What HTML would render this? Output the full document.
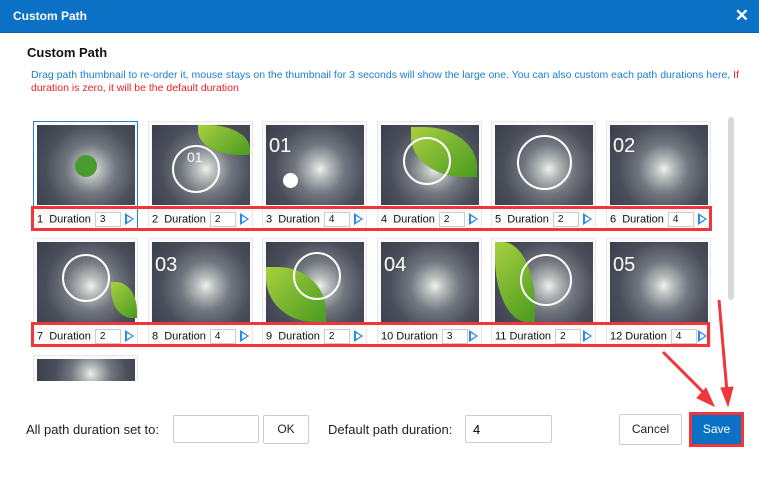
<!DOCTYPE html><html><head><meta charset="utf-8"><style>
*{margin:0;padding:0;box-sizing:border-box}
body{width:759px;height:497px;background:#fff;position:relative;overflow:hidden;font-family:"Liberation Sans",sans-serif}
.bar{position:absolute;left:0;top:0;width:759px;height:33px;background:#0a71c5;border-bottom:1px solid #0b5fa5}
.bar span{position:absolute;left:13px;top:9px;color:#fff;font-size:12px;font-weight:bold}
.x{position:absolute;right:10px;top:6px;color:#fff;font-size:17px;font-weight:bold}
.h{position:absolute;left:27px;top:45px;font-size:13px;font-weight:bold;color:#111}
.d{position:absolute;left:31px;top:69px;font-size:10.5px;line-height:13px;color:#1a7fd0;width:728px}
.d b{font-weight:normal;color:#f02020}
.card{position:absolute;width:105px;height:109px;border:1px solid #e8e8e8;background:#fafafa}
.th{position:absolute;left:3px;top:3px;width:98px;height:80px;background:radial-gradient(circle at 55% 55%,#eef3ee 0%,#b5baba 14%,#72767f 36%,#4a4e5a 65%,#3a3d4a 100%)}
.card.sel{border:1px solid #1e7fd8}
.ring{position:absolute;border:2px solid #fff;border-radius:50%}
.num{position:absolute;color:#fff;font-size:20px}
.leaf{position:absolute;background:linear-gradient(135deg,#a8d040,#4a9a20);border-radius:0 80% 0 80%}
.ft{position:absolute;left:3px;top:90px;font-size:11px;color:#111;white-space:nowrap}
.ft i{font-style:normal;display:inline-block;width:26px;height:15px;border:1px solid #ccc;background:#fff;vertical-align:middle;font-size:10px;padding-left:4px;line-height:13px;margin-left:4px}
.ft em{position:absolute;left:88px;top:1px;width:0;height:0;border-left:9px solid #2a8be0;border-top:6px solid transparent;border-bottom:6px solid transparent}
.ft em:after{content:"";position:absolute;left:-7px;top:-3px;border-left:5px solid #fff;border-top:3px solid transparent;border-bottom:3px solid transparent}
.red{position:absolute;border:3px solid #f0363a}
.lbl{position:absolute;font-size:13px;color:#222}
.in{position:absolute;border:1px solid #ccc;background:#fff;border-radius:2px;font-size:13px;padding:6px 7px}
.btn{position:absolute;border:1px solid #ccc;background:#fff;border-radius:2px;font-size:12px;text-align:center;color:#222}
</style></head><body>
<div class="bar"><span>Custom Path</span><div class="x">✕</div></div>
<div class="h">Custom Path</div>
<div class="d">Drag path thumbnail to re-order it, mouse stays on the thumbnail for 3 seconds will show the large one. You can also custom each path durations here, <b>If duration is zero, it will be the default duration</b></div>

<div class="card sel" style="left:33px;top:121px"><div class="th"><div class="leaf" style="left:38px;top:30px;width:22px;height:22px;border-radius:50%;background:#4a9a30"></div></div><div class="ft">1&nbsp; Duration<i>3</i><em></em></div></div>
<div class="card" style="left:148px;top:121px"><div class="th"><div class="ring" style="left:20px;top:20px;width:48px;height:48px"></div><div class="leaf" style="left:46px;top:0;width:52px;height:30px"></div><div class="num" style="left:35px;top:24px;font-size:14px">01</div></div><div class="ft">2&nbsp; Duration<i>2</i><em></em></div></div>
<div class="card" style="left:262px;top:121px"><div class="th"><div class="num" style="left:3px;top:10px">01</div><div class="ring" style="left:17px;top:48px;width:15px;height:15px;background:#fff"></div></div><div class="ft">3&nbsp; Duration<i>4</i><em></em></div></div>
<div class="card" style="left:377px;top:121px"><div class="th"><div class="leaf" style="left:30px;top:2px;width:66px;height:50px"></div><div class="ring" style="left:22px;top:12px;width:48px;height:48px"></div></div><div class="ft">4&nbsp; Duration<i>2</i><em></em></div></div>
<div class="card" style="left:491px;top:121px"><div class="th"><div class="ring" style="left:22px;top:10px;width:55px;height:55px"></div></div><div class="ft">5&nbsp; Duration<i>2</i><em></em></div></div>
<div class="card" style="left:606px;top:121px"><div class="th"><div class="num" style="left:3px;top:10px">02</div></div><div class="ft">6&nbsp; Duration<i>4</i><em></em></div></div>

<div class="card" style="left:33px;top:238px"><div class="th"><div class="ring" style="left:25px;top:12px;width:48px;height:48px"></div><div class="leaf" style="left:74px;top:40px;width:26px;height:36px"></div></div><div class="ft">7&nbsp; Duration<i>2</i><em></em></div></div>
<div class="card" style="left:148px;top:238px"><div class="th"><div class="num" style="left:3px;top:12px">03</div></div><div class="ft">8&nbsp; Duration<i>4</i><em></em></div></div>
<div class="card" style="left:262px;top:238px"><div class="th"><div class="leaf" style="left:0;top:25px;width:60px;height:55px"></div><div class="ring" style="left:27px;top:10px;width:48px;height:48px"></div></div><div class="ft">9&nbsp; Duration<i>2</i><em></em></div></div>
<div class="card" style="left:377px;top:238px"><div class="th"><div class="num" style="left:3px;top:12px">04</div></div><div class="ft">10 Duration<i>3</i><em></em></div></div>
<div class="card" style="left:491px;top:238px"><div class="th"><div class="leaf" style="left:0;top:0;width:40px;height:80px"></div><div class="ring" style="left:25px;top:12px;width:52px;height:52px"></div></div><div class="ft">11 Duration<i>2</i><em></em></div></div>
<div class="card" style="left:606px;top:238px"><div class="th"><div class="num" style="left:3px;top:12px">05</div></div><div class="ft">12 Duration<i>4</i><em></em></div></div>

<div class="card" style="left:33px;top:355px;height:30px;border-bottom:none"><div class="th" style="height:27px"></div></div>
<div style="position:absolute;left:0;top:381px;width:720px;height:10px;background:#fff"></div>

<div style="position:absolute;left:728px;top:117px;width:6px;height:183px;background:#d8d8d8;border-radius:3px"></div>

<div class="red" style="left:31px;top:206px;width:681px;height:25px"></div>
<div class="red" style="left:31px;top:322px;width:679px;height:25px"></div>

<div class="lbl" style="left:26px;top:422px">All path duration set to:</div>
<div class="in" style="left:173px;top:415px;width:86px;height:28px"></div>
<div class="btn" style="left:263px;top:415px;width:46px;height:29px;line-height:27px">OK</div>
<div class="lbl" style="left:328px;top:422px">Default path duration:</div>
<div class="in" style="left:465px;top:415px;width:87px;height:28px">4</div>
<div class="btn" style="left:619px;top:414px;width:63px;height:31px;line-height:29px">Cancel</div>
<div style="position:absolute;left:689px;top:412px;width:55px;height:35px;border:3px solid #f0363a;background:#0a71c5;color:#fff;font-size:12px;text-align:center;line-height:29px">Save</div>

<svg style="position:absolute;left:0;top:0" width="759" height="497">
<g fill="#f0363a" stroke="#f0363a">
<line x1="663" y1="352" x2="707" y2="396" stroke-width="3"/>
<polygon points="714,406 697,398 706,388" />
<line x1="719" y1="300" x2="727" y2="392" stroke-width="3"/>
<polygon points="728,406 721,388 733,387"/>
</g></svg>
</body></html>
